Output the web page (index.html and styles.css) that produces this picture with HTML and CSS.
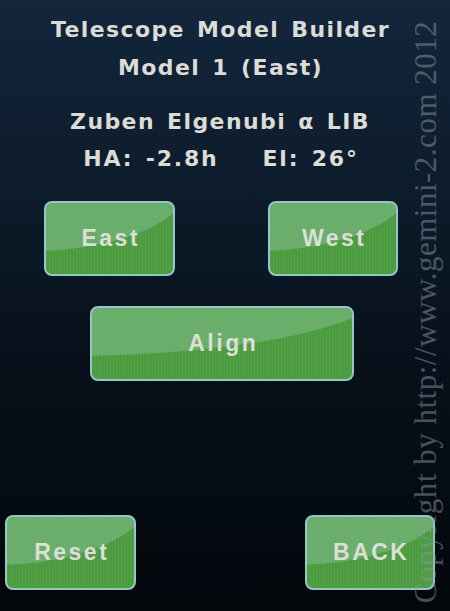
FILE: index.html
```html
<!DOCTYPE html>
<html>
<head>
<meta charset="utf-8">
<link rel="stylesheet" href="styles.css">
</head>
<body>
<div class="screen">
  <div class="titles">
    <div class="line">Telescope Model Builder</div>
    <div class="line">Model 1 (East)</div>
  </div>
  <div class="info">
    <div class="line">Zuben Elgenubi α LIB</div>
    <div class="line">HA: -2.8h<span class="gap"></span>El: 26°</div>
  </div>
  <div class="row row-top">
    <div class="btn btn-east"><span class="label">East</span></div>
    <div class="btn btn-west"><span class="label">West</span></div>
  </div>
  <div class="row row-mid">
    <div class="btn btn-align"><span class="label">Align</span></div>
  </div>
  <div class="row row-bottom">
    <div class="btn btn-reset"><span class="label">Reset</span></div>
    <div class="btn btn-back"><span class="label">BACK</span></div>
  </div>
  <div class="watermark">Copyright by http://www.gemini-2.com 2012</div>
</div>
</body>
</html>
```
FILE: styles.css
```css
html, body {
  margin: 0;
  padding: 0;
  background: #03070c;
}
.screen {
  position: relative;
  width: 450px;
  height: 611px;
  overflow: hidden;
  display: flex;
  flex-direction: column;
  background: linear-gradient(180deg, #13263c 0%, #0d1c2c 30%, #07101a 60%, #03070c 100%);
  font-family: "DejaVu Sans", Verdana, sans-serif;
  font-weight: bold;
  color: #dcdcd6;
}
.titles {
  padding-top: 11px;
  padding-right: 9px;
  text-align: center;
}
.titles .line {
  font-size: 22px;
  line-height: 38px;
  letter-spacing: 1.4px;
  word-spacing: 3px;
}
.info {
  padding-top: 16px;
  padding-right: 10px;
  text-align: center;
}
.info .line {
  font-size: 22px;
  line-height: 37px;
  letter-spacing: 1.4px;
  word-spacing: 3px;
}
.info .line + .line {
  letter-spacing: 1.8px;
  padding-left: 2px;
}
.gap {
  display: inline-block;
  width: 44px;
}
.row {
  display: flex;
}
.row-top {
  margin-top: 24px;
  padding: 0 52px 0 44px;
  justify-content: space-between;
}
.row-mid {
  margin-top: 30px;
  padding-left: 90px;
}
.row-bottom {
  margin-top: auto;
  margin-bottom: 21px;
  padding: 0 15px 0 5px;
  justify-content: space-between;
}
.btn {
  position: relative;
  overflow: hidden;
  box-sizing: border-box;
  height: 75px;
  border: 2px solid #93c6c4;
  border-radius: 8px;
  background-color: #4b9b3f;
  background-image: repeating-linear-gradient(90deg, rgba(255, 255, 255, 0.05) 0 1px, rgba(0, 0, 0, 0) 1px 3px);
  color: #dcdfd6;
  display: flex;
  align-items: center;
  justify-content: center;
}
.btn::before {
  content: "";
  position: absolute;
  left: -135%;
  top: -135%;
  width: 250%;
  height: 203%;
  border-radius: 50%;
  background: rgba(175, 215, 205, 0.3);
}
.label {
  position: relative;
  font-family: "Liberation Sans", Arial, sans-serif;
  font-size: 23px;
  letter-spacing: 2.5px;
  margin-right: -2.5px;
}
.btn-east { width: 131px; }
.btn-west { width: 130px; }
.btn-align { width: 264px; }
.btn-reset { width: 131px; }
.btn-back { width: 130px; }
.watermark {
  position: absolute;
  left: 426px;
  top: 312px;
  transform: translate(-50%, -50%) rotate(-90deg);
  white-space: nowrap;
  font-family: "Liberation Serif", "Times New Roman", serif;
  font-weight: normal;
  font-size: 31px;
  color: rgba(140, 150, 160, 0.5);
  letter-spacing: 0.5px;
}
```
